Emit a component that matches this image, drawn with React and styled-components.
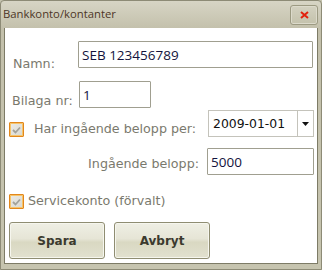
import React from 'react';
import styled, { createGlobalStyle } from 'styled-components';

const GlobalStyle = createGlobalStyle`
  html, body {
    margin: 0;
    padding: 0;
    background: #c6c4af;
  }
`;

const Window = styled.div`
  width: 322px;
  height: 270px;
  box-sizing: border-box;
  display: flex;
  flex-direction: column;
  background: linear-gradient(#d7d5c5, #c3c0ab 28px, #c6c4af);
  border: 1px solid #8d8b76;
  border-radius: 4px 4px 0 0;
`;

const TitleBar = styled.div`
  height: 27px;
  display: flex;
  align-items: center;
  justify-content: space-between;
  padding: 0 3px 2px 2px;
  box-sizing: border-box;
`;

const Title = styled.span`
  font-family: "Open Sans", sans-serif;
  font-size: 11.3px;
  color: #4d3627;
`;

const CloseButton = styled.div`
  width: 28px;
  height: 20px;
  box-sizing: border-box;
  border: 1px solid #9c9a82;
  border-radius: 3px;
  background: linear-gradient(#d3d1c0, #c4c2ac);
  box-shadow: inset 0 0 0 1px #dcdacb;
  display: flex;
  align-items: center;
  justify-content: center;
  margin-top: 3px;
`;

const Content = styled.div`
  flex: 1;
  margin: 0 3px 5px 3px;
  background: #fff;
  border: 1px solid #7d7b66;
  border-top: none;
  padding: 13px 0 0 0;
  display: flex;
  flex-direction: column;
  font-family: "DejaVu Sans", Verdana, sans-serif;
`;

const Row = styled.div`
  display: flex;
  align-items: flex-end;
  height: ${(p) => p.$h || 27}px;
  margin-top: ${(p) => p.$mt || 0}px;
  padding-left: ${(p) => p.$pl || 0}px;
`;

const Label = styled.span`
  width: ${(p) => p.$w}px;
  flex-shrink: 0;
  box-sizing: border-box;
  padding-left: ${(p) => p.$pl || 0}px;
  font-size: 12.7px;
  line-height: 14px;
  color: #7a796d;
  text-align: ${(p) => p.$align || 'left'};
  margin-bottom: ${(p) => p.$mb || 0}px;
  white-space: nowrap;
`;

const TextBox = styled.div`
  width: ${(p) => p.$w}px;
  height: 27px;
  box-sizing: border-box;
  border: 1px solid #a09f90;
  border-radius: 1px;
  padding: 0 3px;
  display: flex;
  align-items: center;
  font-family: "Open Sans", sans-serif;
  font-size: 13.5px;
  color: #13133d;
  margin-left: ${(p) => p.$ml || 0}px;
`;

const DateSelect = styled.div`
  width: 106px;
  height: 27px;
  box-sizing: border-box;
  border: 1px solid #c4c3bb;
  display: flex;
  margin-left: ${(p) => p.$ml || 0}px;
`;

const DateValue = styled.span`
  flex: 1;
  display: flex;
  align-items: center;
  padding-left: 4px;
  font-size: 12.4px;
  color: #111;
`;

const DropButton = styled.span`
  width: 15px;
  border-left: 1px solid #c4c3bb;
  display: flex;
  align-items: center;
  justify-content: center;
`;

const Check = styled.span`
  width: 15px;
  height: 15px;
  box-sizing: border-box;
  flex-shrink: 0;
  border: 1px solid #e2871c;
  border-radius: 1px;
  background: linear-gradient(135deg, #ecebe6, #d9d8d0);
  box-shadow: inset 0 0 0 1px #f6c46a;
  display: flex;
  align-items: center;
  justify-content: center;
`;

const ButtonRow = styled.div`
  display: flex;
  gap: 9px;
  margin-top: 13px;
  padding-left: 4px;
`;

const Button = styled.div`
  width: 96px;
  height: 37px;
  box-sizing: border-box;
  border: 1px solid #8f8d72;
  border-radius: 3px;
  background: linear-gradient(#efefe4, #e6e5d6 45%, #d9d8c2 55%, #e2e1cf);
  box-shadow: inset 0 0 0 1px #f6f6ee;
  display: flex;
  align-items: center;
  justify-content: center;
  font-family: "DejaVu Sans", Verdana, sans-serif;
  font-weight: bold;
  font-size: 12px;
  color: #3b3a2e;
`;

const CheckMark = () => (
  <svg width="9" height="8" viewBox="0 0 9 8">
    <path d="M1 4 L3.5 6.5 L8 1.5" fill="none" stroke="#a3a29a" strokeWidth="1.8" />
  </svg>
);

export default function App() {
  return (
    <>
      <GlobalStyle />
      <Window>
        <TitleBar>
          <Title>Bankkonto/kontanter</Title>
          <CloseButton>
            <svg width="9" height="8" viewBox="0 0 9 8">
              <path d="M1 1 L8 7 M8 1 L1 7" stroke="#e2220e" strokeWidth="2" />
            </svg>
          </CloseButton>
        </TitleBar>
        <Content>
          <Row $pl={8}>
            <Label $w={65} $mb={-3}>Namn:</Label>
            <TextBox $w={235}>SEB 123456789</TextBox>
          </Row>
          <Row $mt={13} $pl={7}>
            <Label $w={67}>Bilaga nr:</Label>
            <TextBox $w={72}>1</TextBox>
          </Row>
          <Row $mt={2} $pl={4}>
            <Check><CheckMark /></Check>
            <Label $w={193} $pl={10} $mb={1}>Har ingående belopp per:</Label>
            <DateSelect $ml={-9}>
              <DateValue>2009-01-01</DateValue>
              <DropButton>
                <svg width="7" height="4" viewBox="0 0 7 4">
                  <path d="M0 0 H7 L3.5 4 Z" fill="#111" />
                </svg>
              </DropButton>
            </DateSelect>
          </Row>
          <Row $mt={11}>
            <Label $w={194} $align="right" $mb={4}>Ingående belopp:</Label>
            <TextBox $w={107} $ml={8}>5000</TextBox>
          </Row>
          <Row $mt={18} $h={16} $pl={4}>
            <Check><CheckMark /></Check>
            <Label $w={200} $pl={4} $mb={1}>Servicekonto (förvalt)</Label>
          </Row>
          <ButtonRow>
            <Button>Spara</Button>
            <Button>Avbryt</Button>
          </ButtonRow>
        </Content>
      </Window>
    </>
  );
}
